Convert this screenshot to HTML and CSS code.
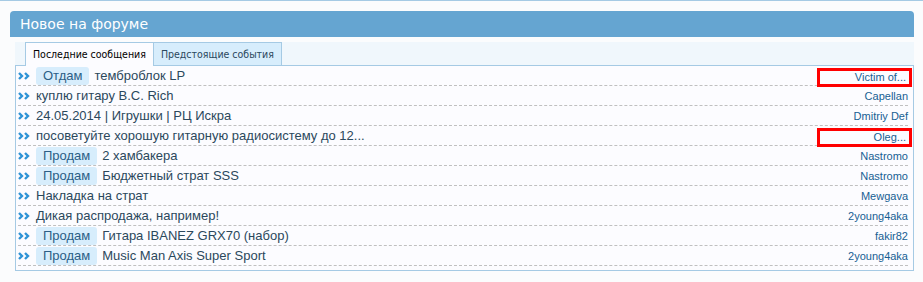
FILE: index.html
```html
<!DOCTYPE html>
<html lang="ru">
<head>
  <meta charset="UTF-8" />
  <title>Новое на форуме</title>
  <link rel="stylesheet" href="styles.css">
</head>
<body>

  <div class="section">
    <h3 class="section-header">Новое на форуме</h3>

    <div class="tabs-panel">
      <ul class="tabs">
        <li class="tab active">Последние сообщения</li>
        <li class="tab">Предстоящие события</li>
      </ul>

      <ul class="thread-list">
        <li class="thread">
          <span class="arrow"><svg width="13" height="8" viewBox="0 0 13 8"><path d="M1 1l3 3-3 3M7 1l3 3-3 3" /></svg></span>
          <span class="title"><span class="prefix">Отдам</span>темброблок LP</span>
          <span class="user marked">Victim of...</span>
        </li>
        <li class="thread">
          <span class="arrow"><svg width="13" height="8" viewBox="0 0 13 8"><path d="M1 1l3 3-3 3M7 1l3 3-3 3" /></svg></span>
          <span class="title">куплю гитару B.C. Rich</span>
          <span class="user">Capellan</span>
        </li>
        <li class="thread">
          <span class="arrow"><svg width="13" height="8" viewBox="0 0 13 8"><path d="M1 1l3 3-3 3M7 1l3 3-3 3" /></svg></span>
          <span class="title">24.05.2014 | Игрушки | РЦ Искра</span>
          <span class="user">Dmitriy Def</span>
        </li>
        <li class="thread">
          <span class="arrow"><svg width="13" height="8" viewBox="0 0 13 8"><path d="M1 1l3 3-3 3M7 1l3 3-3 3" /></svg></span>
          <span class="title">посоветуйте хорошую гитарную радиосистему до 12...</span>
          <span class="user marked">Oleg...</span>
        </li>
        <li class="thread">
          <span class="arrow"><svg width="13" height="8" viewBox="0 0 13 8"><path d="M1 1l3 3-3 3M7 1l3 3-3 3" /></svg></span>
          <span class="title"><span class="prefix">Продам</span>2 хамбакера</span>
          <span class="user">Nastromo</span>
        </li>
        <li class="thread">
          <span class="arrow"><svg width="13" height="8" viewBox="0 0 13 8"><path d="M1 1l3 3-3 3M7 1l3 3-3 3" /></svg></span>
          <span class="title"><span class="prefix">Продам</span>Бюджетный страт SSS</span>
          <span class="user">Nastromo</span>
        </li>
        <li class="thread">
          <span class="arrow"><svg width="13" height="8" viewBox="0 0 13 8"><path d="M1 1l3 3-3 3M7 1l3 3-3 3" /></svg></span>
          <span class="title">Накладка на страт</span>
          <span class="user">Mewgava</span>
        </li>
        <li class="thread">
          <span class="arrow"><svg width="13" height="8" viewBox="0 0 13 8"><path d="M1 1l3 3-3 3M7 1l3 3-3 3" /></svg></span>
          <span class="title">Дикая распродажа, например!</span>
          <span class="user">2young4aka</span>
        </li>
        <li class="thread">
          <span class="arrow"><svg width="13" height="8" viewBox="0 0 13 8"><path d="M1 1l3 3-3 3M7 1l3 3-3 3" /></svg></span>
          <span class="title"><span class="prefix">Продам</span>Гитара IBANEZ GRX70 (набор)</span>
          <span class="user">fakir82</span>
        </li>
        <li class="thread">
          <span class="arrow"><svg width="13" height="8" viewBox="0 0 13 8"><path d="M1 1l3 3-3 3M7 1l3 3-3 3" /></svg></span>
          <span class="title"><span class="prefix">Продам</span>Music Man Axis Super Sport</span>
          <span class="user">2young4aka</span>
        </li>
      </ul>
    </div>
  </div>

</body>
</html>
```

FILE: styles.css
```css
body {
  margin: 0;
  background-color: #fbfcfd;
  border-top: 1px solid #a5cae4;
  font-family: 'Liberation Sans', Arial, sans-serif;
  color: #2b485c;
}

.section {
  padding: 10px 9px 0 10px;
}

.section-header {
  margin: 0;
  height: 26px;
  line-height: 26px;
  padding: 0 10px;
  background-color: #65a5d1;
  border-radius: 4px 4px 0 0;
  color: #fff;
  font-family: 'DejaVu Sans', sans-serif;
  font-size: 14px;
  font-weight: normal;
}

.tabs-panel {
  margin: 5px 0 0 5px;
}

.tabs {
  list-style: none;
  margin: 0;
  padding: 0 0 0 10px;
  display: flex;
  background-color: #f0f7fc;
  height: 23px;
  border-bottom: 1px solid #a5cae4;
}

.tab {
  height: 22px;
  line-height: 22px;
  padding: 0 7px;
  border: 1px solid #a5cae4;
  border-bottom: none;
  background-color: #d7edfc;
  font-family: 'DejaVu Sans Condensed', 'DejaVu Sans', sans-serif;
  font-size: 10.5px;
  color: #2b485c;
}

.tab.active {
  height: 23px;
  background-color: #fcfcff;
  color: #000;
  border-right: none;
}

.thread-list {
  list-style: none;
  margin: 0;
  padding: 0 5px 4px 2px;
  background-color: #fcfcff;
  border: 1px solid #a5cae4;
  border-top: none;
}

.thread {
  display: flex;
  align-items: center;
  height: 19px;
  border-bottom: 1px dashed #c0c0c0;
  font-size: 13px;
}

.arrow {
  width: 18px;
  display: flex;
}

.arrow svg {
  fill: none;
  stroke: #2e93d6;
  stroke-width: 2.4;
}

.title {
  flex: 1;
  white-space: nowrap;
  color: #2b485c;
}

.prefix {
  display: inline-block;
  background-color: #d7edfc;
  color: #2b5e86;
  line-height: 16px;
  padding: 1px 7px;
  margin-right: 5px;
  border-radius: 3px;
}

.user {
  font-size: 11px;
  color: #176093;
}

.marked {
  align-self: flex-start;
  margin-top: 2px;
  width: 82px;
  line-height: 13px;
  text-align: right;
  padding: 0 3px 0 4px;
  margin-right: -4px;
  border: 3px solid #f00;
}
```
